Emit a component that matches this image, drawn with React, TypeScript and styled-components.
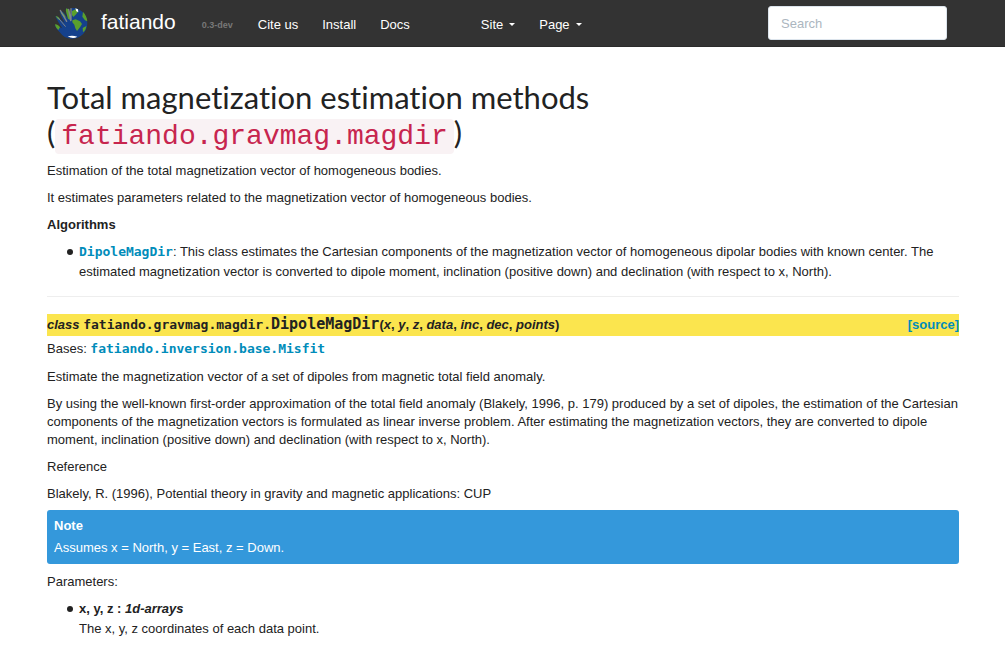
import React from "react";
import styled, { createGlobalStyle } from "styled-components";

const sans = '"Liberation Sans", Arial, sans-serif';
const mono = '"DejaVu Sans Mono", monospace';

const GlobalStyle = createGlobalStyle`
  *, *::before, *::after { box-sizing: border-box; }
  body {
    margin: 0;
    background: #ffffff;
    color: #222222;
    font: 13px/18px ${sans};
  }
`;

const NavBar = styled.header`
  background: #333333;
  border-bottom: 1px solid #2b2b2b;
`;

const NavInner = styled.div`
  display: flex;
  align-items: center;
  min-height: 46px;
  padding: 0 58px 0 52px;
`;

const Brand = styled.a`
  display: flex;
  align-items: center;
  gap: 11px;
  color: #ffffff;
  font-size: 21px;
  line-height: 24px;
  text-decoration: none;
`;

const BrandName = styled.span`
  padding-bottom: 2px;
`;

const Version = styled.span`
  margin: 3px 0 0 26px;
  color: #777777;
  font-size: 9px;
  font-weight: bold;
`;

const NavList = styled.ul<{ $offset: number }>`
  display: flex;
  gap: 24px;
  margin: 3px 0 0 ${(p) => p.$offset}px;
  padding: 0;
  list-style: none;
`;

const NavLink = styled.a`
  color: #ffffff;
  text-decoration: none;
`;

const NavMenuButton = styled.button`
  display: flex;
  align-items: center;
  gap: 6px;
  padding: 0;
  border: 0;
  background: none;
  color: #ffffff;
  font: inherit;
  cursor: pointer;
`;

const Caret = styled.span`
  border: 3px solid transparent;
  border-top-color: currentColor;
  border-bottom-width: 0;
`;

const SearchForm = styled.form`
  margin-left: auto;
`;

const SearchInput = styled.input`
  display: block;
  width: 179px;
  height: 34px;
  padding: 6px 12px;
  border: 1px solid #dce4ec;
  border-radius: 3px;
  background: #ffffff;
  color: #222222;
  font: 13px/18px ${sans};
  &::placeholder { color: #acb6c0; opacity: 1; }
`;

const Main = styled.main`
  padding: 33px 46px 8px 47px;
`;

const Title = styled.h1`
  max-width: 640px;
  margin: 0 0 11px;
  font: 400 31px/35px Lato, sans-serif;
  font-variant-ligatures: none;
`;

const TitleCode = styled.code`
  padding: 2px 6px;
  border-radius: 4px;
  background: #f9f2f4;
  color: #c7254e;
  font: 28px/28px "Liberation Mono", monospace;
`;

const Paragraph = styled.p`
  margin: 0 0 9px;
`;

const ListLead = styled(Paragraph)`
  margin-bottom: 8px;
`;

const Citation = styled(Paragraph)`
  margin-bottom: 7px;
`;

const BulletList = styled.ul`
  margin: 0 0 14px;
  padding-left: 20px;
  line-height: 20px;
  list-style: none;
`;

const BulletItem = styled.li`
  display: flex;
  gap: 6px;
  &::before {
    content: "";
    flex: none;
    width: 6px;
    height: 6px;
    margin-top: 7px;
    border-radius: 50%;
    background: currentColor;
  }
`;

const Link = styled.a`
  color: #008cba;
  text-decoration: none;
`;

const CodeLink = styled(Link)`
  font: bold 13px/16px ${mono};
`;

const Divider = styled.hr`
  margin: 0 0 17px;
  border: 0;
  border-top: 1px solid #eeeeee;
`;

const ClassDoc = styled.dl`
  margin: 0;
`;

const Signature = styled.dt`
  display: flex;
  justify-content: space-between;
  background: #fbe54e;
  font-weight: bold;
  line-height: 22px;
`;

const ModulePath = styled.code`
  font: bold 13px/16px ${mono};
`;

const ClassName = styled(ModulePath)`
  font-size: 15px;
`;

const ClassBody = styled.dd`
  margin: 0;
  padding-top: 4px;
`;

const Bases = styled(Paragraph)`
  margin-bottom: 10px;
`;

const Note = styled.aside`
  margin: 0 0 9px;
  padding: 6px 7px;
  border-radius: 3px;
  background: #3498db;
  color: #ffffff;
  line-height: 20px;
`;

const NoteTitle = styled.p`
  margin: 0 0 2px;
  font-weight: bold;
`;

const NoteText = styled.p`
  margin: 0;
`;

function Logo() {
  return (
    <svg width="38" height="38" viewBox="0 0 114 114" aria-hidden="true">
      <path
        d="M58 12C86 10 106 32 106 58C106 84 86 104 61 104C44 104 34 98 26 88C20 82 12 74 9 64C18 65 24 70 31 73C24 62 14 48 10 36C20 38 30 50 38 57C32 44 24 32 23 22C32 18 40 32 48 46C46 34 40 22 42 14C48 12 52 22 56 34Z"
        fill="#15418c"
      />
      <path d="M42 14c7-2 12 8 14 20l-1 14-7-4c-2-12-8-22-6-30z" fill="#5aa02c" />
      <path d="M26 24c6 0 12 8 16 17l-6-2c-5-5-9-9-10-15z" fill="#5aa02c" />
      <path d="M9 61c7 0 13 5 15 9l-5 8c-5-4-9-10-10-17zM11 36c5 0 9 4 13 9l-4 2c-4-3-7-7-9-11z" fill="#5aa02c" />
      <path d="M61 49l10-3 13 6 6 8-6 10-9 11-5-8-3-11-6-7z" fill="#5aa02c" />
      <path d="M60 21l11-5 7 8-7 8-7 7-4-6z" fill="#5aa02c" />
      <path d="M93 24c8 8 12 18 13 28l-7-3-8-11zM92 72l11-6c-1 10-5 15-10 19z" fill="#5aa02c" />
      <path d="M70 13l8 3 1 9-6-3zM47 97q14-4 29 1-13 9-29-1z" fill="#ffffff" />
      <path d="M25 19l19 33M50 16l6 34M57 14v35" fill="none" stroke="#80868a" strokeWidth="4" strokeLinecap="round" />
      <path d="M18 41l22 26" fill="none" stroke="#80868a" strokeWidth="3" strokeLinecap="round" />
    </svg>
  );
}

const params = ["x", "y", "z", "data", "inc", "dec", "points"];

export default function App() {
  return (
    <>
      <GlobalStyle />
      <NavBar>
        <NavInner>
          <Brand href="#">
            <Logo />
            <BrandName>fatiando</BrandName>
          </Brand>
          <Version>0.3-dev</Version>
          <NavList $offset={25}>
            {["Cite us", "Install", "Docs"].map((t) => (
              <li key={t}><NavLink href="#">{t}</NavLink></li>
            ))}
          </NavList>
          <NavList $offset={71}>
            {["Site", "Page"].map((t) => (
              <li key={t}><NavMenuButton type="button">{t}<Caret /></NavMenuButton></li>
            ))}
          </NavList>
          <SearchForm role="search">
            <SearchInput type="text" placeholder="Search" aria-label="Search" />
          </SearchForm>
        </NavInner>
      </NavBar>
      <Main>
        <Title>
          Total magnetization estimation methods (<TitleCode>fatiando.gravmag.magdir</TitleCode>)
        </Title>
        <Paragraph>Estimation of the total magnetization vector of homogeneous bodies.</Paragraph>
        <Paragraph>It estimates parameters related to the magnetization vector of homogeneous bodies.</Paragraph>
        <ListLead><strong>Algorithms</strong></ListLead>
        <BulletList>
          <BulletItem>
            <div>
              <CodeLink href="#">DipoleMagDir</CodeLink>: This class estimates the Cartesian components of the
              magnetization vector of homogeneous dipolar bodies with known center. The estimated magnetization
              vector is converted to dipole moment, inclination (positive down) and declination (with respect to
              x, North).
            </div>
          </BulletItem>
        </BulletList>
        <Divider />
        <ClassDoc>
          <Signature>
            <span>
              <em>class</em> <ModulePath>fatiando.gravmag.magdir.</ModulePath>
              <ClassName>DipoleMagDir</ClassName>(
              {params.map((p, i) => (
                <React.Fragment key={p}>{i > 0 && ", "}<em>{p}</em></React.Fragment>
              ))}
              )
            </span>
            <Link href="#">[source]</Link>
          </Signature>
          <ClassBody>
            <Bases>Bases: <CodeLink href="#">fatiando.inversion.base.Misfit</CodeLink></Bases>
            <Paragraph>Estimate the magnetization vector of a set of dipoles from magnetic total field anomaly.</Paragraph>
            <Paragraph>
              By using the well-known first-order approximation of the total field anomaly (Blakely, 1996, p. 179)
              produced by a set of dipoles, the estimation of the Cartesian components of the magnetization vectors
              is formulated as linear inverse problem. After estimating the magnetization vectors, they are
              converted to dipole moment, inclination (positive down) and declination (with respect to x, North).
            </Paragraph>
            <Paragraph>Reference</Paragraph>
            <Citation>Blakely, R. (1996), Potential theory in gravity and magnetic applications: CUP</Citation>
            <Note>
              <NoteTitle>Note</NoteTitle>
              <NoteText>Assumes x = North, y = East, z = Down.</NoteText>
            </Note>
            <ListLead>Parameters:</ListLead>
            <BulletList>
              <BulletItem>
                <div>
                  <strong>x, y, z : <em>1d-arrays</em></strong>
                  <div>The x, y, z coordinates of each data point.</div>
                </div>
              </BulletItem>
            </BulletList>
          </ClassBody>
        </ClassDoc>
      </Main>
    </>
  );
}
